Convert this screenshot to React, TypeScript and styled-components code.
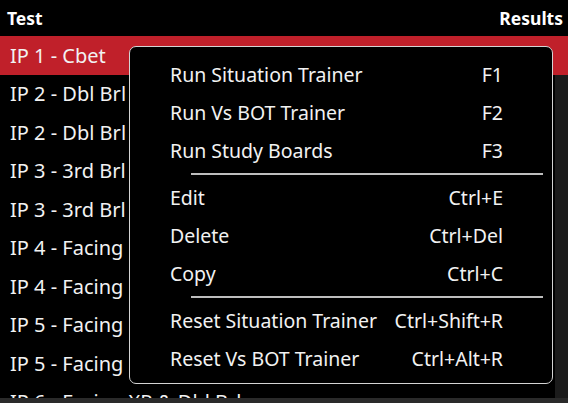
import React from 'react';
import styled, { createGlobalStyle } from 'styled-components';

const GlobalStyle = createGlobalStyle`
  html, body {
    margin: 0;
    padding: 0;
    background: #000;
    overflow: hidden;
  }
  body {
    font-family: "Noto Sans", "Open Sans", sans-serif;
    color: #f2f2f2;
  }
`;

const Screen = styled.div`
  position: relative;
  width: 568px;
  height: 403px;
  background: #000;
  overflow: hidden;
`;

const Header = styled.div`
  display: flex;
  justify-content: space-between;
  align-items: center;
  height: 36px;
  padding: 0 5px 0 7px;
  font-size: 17.5px;
  font-weight: 700;
  color: #fff;
`;

const Row = styled.div<{ $selected?: boolean }>`
  display: flex;
  align-items: center;
  height: 38.5px;
  background: ${(p) => (p.$selected ? '#c0202a' : '#000')};
`;

const Cell = styled.div`
  flex: 1;
  padding-left: 10px;
  font-size: 20px;
  white-space: nowrap;
  overflow: hidden;
`;

const ResultCell = styled.div<{ $selected?: boolean }>`
  width: 13px;
  align-self: stretch;
  background: ${(p) => (p.$selected ? '#c0202a' : '#1b1b1b')};
`;

const BottomBar = styled.div`
  position: absolute;
  left: 0;
  right: 0;
  bottom: 0;
  height: 5px;
  background: #2a2a2a;
`;

const Menu = styled.div`
  position: absolute;
  left: 129px;
  top: 46px;
  width: 424px;
  height: 338px;
  box-sizing: border-box;
  border: 1.5px solid #d4d4d4;
  border-radius: 7px;
  background: #000;
  padding: 8px 0 0;
`;

const Item = styled.div`
  display: flex;
  justify-content: space-between;
  align-items: center;
  height: 38px;
  padding: 0 49px 0 40px;
  font-size: 19.5px;
  color: #f2f2f2;
  white-space: nowrap;
`;

const Separator = styled.div`
  height: 9px;
  display: flex;
  align-items: center;
  padding: 0 9px 0 61px;

  &::after {
    content: '';
    flex: 1;
    height: 2px;
    background: #bdbdbd;
  }
`;

const rows = [
  'IP 1 - Cbet',
  'IP 2 - Dbl Brl',
  'IP 2 - Dbl Brl',
  'IP 3 - 3rd Brl',
  'IP 3 - 3rd Brl',
  'IP 4 - Facing',
  'IP 4 - Facing',
  'IP 5 - Facing',
  'IP 5 - Facing',
  'IP 6 - Facing XR & Dbl Brl',
];

type Entry = { label: string; key: string } | 'sep';

const entries: Entry[] = [
  { label: 'Run Situation Trainer', key: 'F1' },
  { label: 'Run Vs BOT Trainer', key: 'F2' },
  { label: 'Run Study Boards', key: 'F3' },
  'sep',
  { label: 'Edit', key: 'Ctrl+E' },
  { label: 'Delete', key: 'Ctrl+Del' },
  { label: 'Copy', key: 'Ctrl+C' },
  'sep',
  { label: 'Reset Situation Trainer', key: 'Ctrl+Shift+R' },
  { label: 'Reset Vs BOT Trainer', key: 'Ctrl+Alt+R' },
];

export default function App() {
  return (
    <Screen>
      <GlobalStyle />
      <Header>
        <span>Test</span>
        <span>Results</span>
      </Header>
      {rows.map((r, i) => (
        <Row key={i} $selected={i === 0}>
          <Cell>{r}</Cell>
          <ResultCell $selected={i === 0} />
        </Row>
      ))}
      <BottomBar />
      <Menu>
        {entries.map((e, i) =>
          e === 'sep' ? (
            <Separator key={i} />
          ) : (
            <Item key={i}>
              <span>{e.label}</span>
              <span>{e.key}</span>
            </Item>
          )
        )}
      </Menu>
    </Screen>
  );
}
